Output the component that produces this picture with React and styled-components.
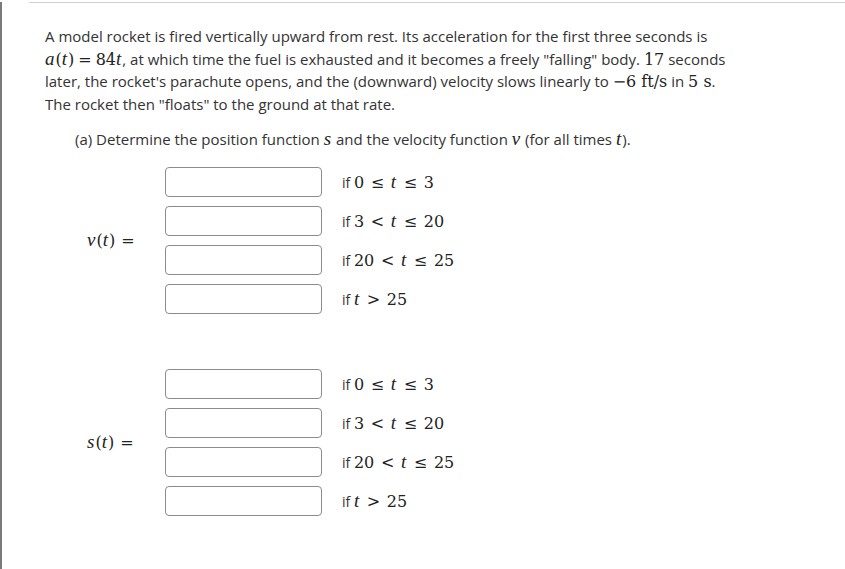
import React from "react";
import styled, { createGlobalStyle } from "styled-components";

const Global = createGlobalStyle`
  html, body { margin: 0; padding: 0; background: #fff; }
  body { font-family: "Open Sans", "Liberation Sans", sans-serif; color: #333; }
`;

const Frame = styled.div`
  min-height: 569px;
  box-sizing: border-box;
  border-left: 2px solid #7a7a7a;
`;

const Rule = styled.div`
  margin: 2px 0 0 27px;
  border-top: 1px solid #cfcfcf;
`;

const Content = styled.div`
  padding: 22px 0 0 43px;
`;

const Para = styled.div`
  font-size: 15px;
  line-height: 22.5px;
`;

const Line = styled.div`
  white-space: nowrap;
`;

const M = styled.span`
  font-family: ${(p) =>
    p.$i ? '"Liberation Serif", "DejaVu Serif", serif' : '"DejaVu Serif", "Liberation Serif", serif'};
  font-size: ${(p) => (p.$i ? "19px" : "16px")};
  color: #222;
  font-style: ${(p) => (p.$i ? "italic" : "normal")};
  padding-right: ${(p) => (p.$i ? "1px" : "0")};
  line-height: 1;
`;

const Op = styled.span`
  font-family: "DejaVu Serif", "Liberation Serif", serif;
  font-size: 16px;
  color: #222;
  line-height: 1;
  padding: 0 ${(p) => p.$pad ?? 4}px;
`;

const Part = styled.div`
  font-size: 15px;
  line-height: 22.5px;
  margin: 13px 0 0 30px;
`;

const Piece = styled.div`
  display: flex;
  align-items: center;
  margin-top: ${(p) => p.$top}px;
`;

const Label = styled.div`
  width: 78px;
  padding-left: 42px;
  font-size: 15px;
  white-space: nowrap;
`;

const Rows = styled.div`
  display: flex;
  flex-direction: column;
  gap: 9px;
`;

const Row = styled.div`
  display: flex;
  align-items: center;
  gap: 20px;
`;

const Box = styled.input`
  width: 157px;
  height: 30px;
  box-sizing: border-box;
  border: 1px solid #8c8c8c;
  border-radius: 4px;
  background: #fff;
  margin: 0;
  padding: 0 6px;
  font-size: 15px;
`;

const Cond = styled.div`
  font-size: 14px;
  white-space: nowrap;
`;

const Lt = ({ c }) => <Op $pad={3}>{c}</Op>;

const conds = [
  <>
    if <M>0</M> <Lt c="≤" /> <M $i>t</M> <Lt c="≤" /> <M>3</M>
  </>,
  <>
    if <M>3</M> <Lt c="<" /> <M $i>t</M> <Lt c="≤" /> <M>20</M>
  </>,
  <>
    if <M>20</M> <Lt c="<" /> <M $i>t</M> <Lt c="≤" /> <M>25</M>
  </>,
  <>
    if <M $i>t</M> <Lt c=">" /> <M>25</M>
  </>,
];

const Group = ({ label, top }) => (
  <Piece $top={top}>
    <Label>
      <M $i>{label}</M>
      <M>(</M>
      <M $i>t</M>
      <M>)</M>
      <Op $pad={6}>=</Op>
    </Label>
    <Rows>
      {conds.map((c, i) => (
        <Row key={i}>
          <Box type="text" />
          <Cond>{c}</Cond>
        </Row>
      ))}
    </Rows>
  </Piece>
);

export default function App() {
  return (
    <>
      <Global />
      <Frame>
        <Rule />
        <Content>
          <Para>
            <Line>
              A model rocket is fired vertically upward from rest. Its acceleration for the first three seconds is
            </Line>
            <Line>
              <M $i>a</M>
              <M>(</M>
              <M $i>t</M>
              <M>)</M>
              <Op>=</Op>
              <M>84</M>
              <M $i>t</M>, at which time the fuel is exhausted and it becomes a freely "falling" body. <M>17</M> seconds
            </Line>
            <Line>
              later, the rocket's parachute opens, and the (downward) velocity slows linearly to <M>−6 ft/s</M> in{" "}
              <M>5 s</M>.
            </Line>
            <Line>The rocket then "floats" to the ground at that rate.</Line>
          </Para>
          <Part>
            (a) Determine the position function <M $i>s</M> and the velocity function <M $i>v</M> (for all times{" "}
            <M $i>t</M>).
          </Part>
          <Group label="v" top={16} />
          <Group label="s" top={55} />
        </Content>
      </Frame>
    </>
  );
}
